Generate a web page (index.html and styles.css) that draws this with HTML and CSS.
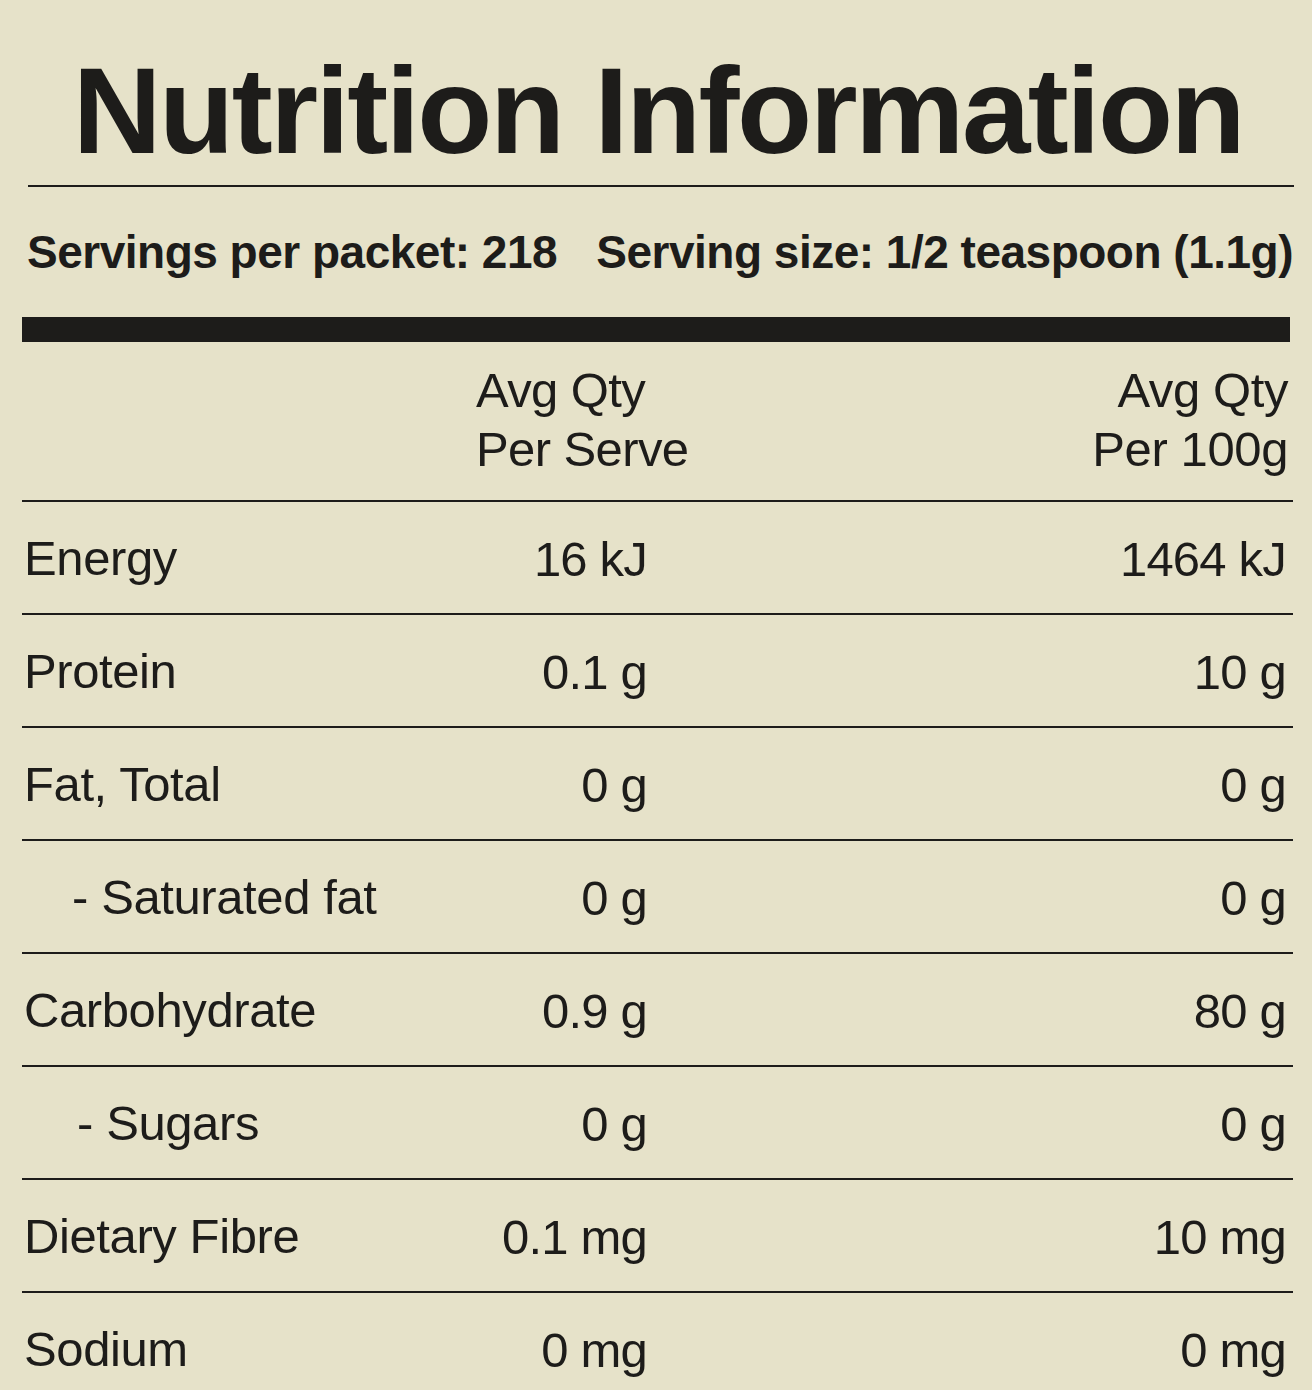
FILE: index.html
```html
<!DOCTYPE html>
<html lang="en">
<head>
<meta charset="utf-8">
<title>Nutrition Information</title>
<link rel="stylesheet" href="styles.css">
</head>
<body>
<main class="panel">
  <h1 class="title">Nutrition Information</h1>
  <div class="rule-thin"></div>
  <div class="servings">
    <span>Servings per packet: 218</span>
    <span>Serving size: 1/2 teaspoon (1.1g)</span>
  </div>
  <div class="rule-thick"></div>
  <div class="table">
    <div class="row head">
      <div class="cell label"></div>
      <div class="cell col2 head-left">Avg Qty<br>Per Serve</div>
      <div class="cell col3 head-right">Avg Qty<br>Per 100g</div>
    </div>
    <div class="row">
      <div class="cell label">Energy</div>
      <div class="cell col2 val">16 kJ</div>
      <div class="cell col3 val">1464 kJ</div>
    </div>
    <div class="row">
      <div class="cell label">Protein</div>
      <div class="cell col2 val">0.1 g</div>
      <div class="cell col3 val">10 g</div>
    </div>
    <div class="row">
      <div class="cell label">Fat, Total</div>
      <div class="cell col2 val">0 g</div>
      <div class="cell col3 val">0 g</div>
    </div>
    <div class="row">
      <div class="cell label indent">- Saturated fat</div>
      <div class="cell col2 val">0 g</div>
      <div class="cell col3 val">0 g</div>
    </div>
    <div class="row">
      <div class="cell label">Carbohydrate</div>
      <div class="cell col2 val">0.9 g</div>
      <div class="cell col3 val">80 g</div>
    </div>
    <div class="row">
      <div class="cell label indent-wide">- Sugars</div>
      <div class="cell col2 val">0 g</div>
      <div class="cell col3 val">0 g</div>
    </div>
    <div class="row">
      <div class="cell label">Dietary Fibre</div>
      <div class="cell col2 val">0.1 mg</div>
      <div class="cell col3 val">10 mg</div>
    </div>
    <div class="row last">
      <div class="cell label">Sodium</div>
      <div class="cell col2 val">0 mg</div>
      <div class="cell col3 val">0 mg</div>
    </div>
  </div>
</main>
</body>
</html>
```
FILE: styles.css
```css
html, body {
  margin: 0;
  padding: 0;
  background: #e6e2c9;
}

body {
  font-family: "Liberation Sans", Arial, sans-serif;
  color: #1d1c1a;
}

.panel {
  padding-top: 49px;
}

.title {
  margin: 0;
  padding-left: 4px;
  font-size: 123px;
  line-height: 123px;
  font-weight: 700;
  letter-spacing: -2.5px;
  text-align: center;
}

.rule-thin {
  height: 2px;
  background: #1d1c1a;
  margin: 13px 18px 0 28px;
}

.servings {
  display: flex;
  justify-content: space-between;
  margin: 42px 19px 0 27px;
  font-size: 46px;
  line-height: 46px;
  font-weight: 700;
  letter-spacing: -0.5px;
  white-space: nowrap;
}

.rule-thick {
  height: 25px;
  background: #1d1c1a;
  margin: 42px 22px 0 22px;
}

.table {
  margin: 0 19px 0 22px;
  font-size: 49px;
  letter-spacing: -0.4px;
}

.row {
  display: grid;
  grid-template-columns: 454px 171px 1fr;
  align-items: center;
  height: 111px;
  border-bottom: 2px solid #1d1c1a;
}

.row.last {
  border-bottom: none;
}

.row.head {
  height: auto;
  align-items: start;
  padding: 19px 0 21px;
  line-height: 59px;
}

.cell {
  white-space: nowrap;
}

.label {
  padding-left: 2px;
}

.indent {
  padding-left: 50px;
}

.indent-wide {
  padding-left: 55px;
}

.col2 {
  text-align: right;
}

.head-left {
  text-align: left;
  letter-spacing: -0.6px;
}

.col3 {
  text-align: right;
  padding-right: 7px;
}

.head-right {
  padding-right: 5px;
}

.val {
  padding-top: 2px;
  letter-spacing: -0.8px;
}
```
